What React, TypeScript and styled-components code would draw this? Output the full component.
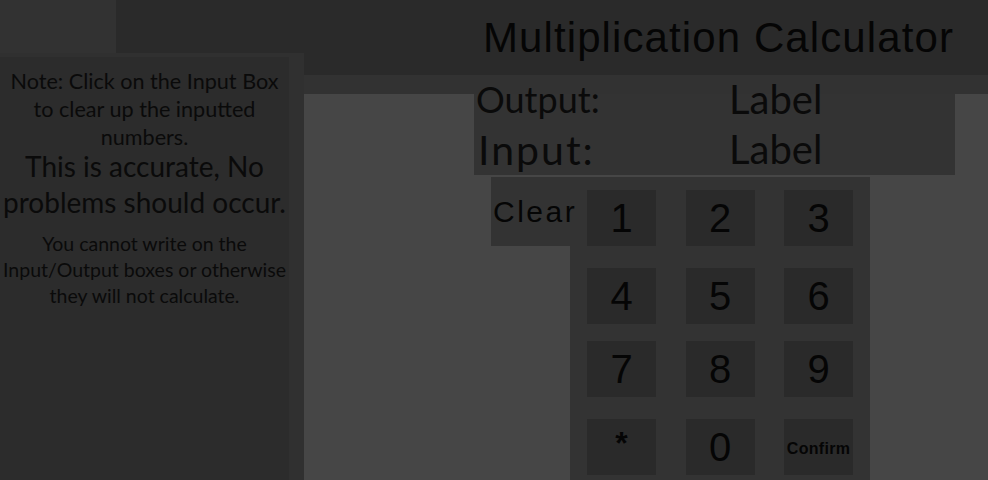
import React from "react";
import styled, { createGlobalStyle } from "styled-components";

const GlobalStyle = createGlobalStyle`
  html, body {
    margin: 0;
    padding: 0;
    background: #333333;
  }
  body {
    width: 988px;
    height: 480px;
    overflow: hidden;
  }
  * { box-sizing: border-box; }
`;

const CARTOON = `"Liberation Sans", Arial, sans-serif`;
const SANS = `Lato, "Noto Sans", sans-serif`;

const Screen = styled.div`
  width: 988px;
  height: 480px;
  display: grid;
  grid-template-columns: 116px 188px 1fr;
  grid-template-rows: 53px 22px 19px 1fr;
  background: #323232;
  overflow: hidden;
`;

const TitleBar = styled.header`
  grid-column: 2 / 4;
  grid-row: 1 / 3;
  background: #2a2a2a;
  display: flex;
  align-items: center;
  justify-content: flex-end;
  padding-right: 34px;
`;

const Title = styled.h1`
  margin: 0;
  font-family: ${CARTOON};
  font-weight: 400;
  font-size: 42px;
  letter-spacing: 1.1px;
  color: #050505;
  line-height: 1;
`;

const SidePanel = styled.aside`
  grid-column: 1 / 3;
  grid-row: 2 / 5;
  z-index: 1;
  background: #303030;
  padding: 4px 15px 0 0;
  display: flex;
`;

const Notes = styled.div`
  flex: 1;
  background: #2c2c2c;
  display: flex;
  flex-direction: column;
  align-items: center;
  text-align: center;
  font-family: ${SANS};
  color: #0a0a0a;
  padding-top: 10px;
`;

const Note = styled.p<{ $size: number; $line: number; $gap?: number }>`
  margin: ${(p) => p.$gap ?? 0}px 0 0;
  font-size: ${(p) => p.$size}px;
  line-height: ${(p) => p.$line}px;
  white-space: pre-line;
`;

const Main = styled.main`
  grid-column: 3;
  grid-row: 4;
  background: #464646;
  display: flex;
  flex-direction: column;
  padding: 0 33px 0 170px;
  min-height: 0;
`;

const Display = styled.section`
  height: 81px;
  background: #333333;
  display: flex;
  flex-direction: column;
  font-family: ${SANS};
  color: #0a0a0a;
`;

const DisplayRow = styled.div<{ $indent: number; $top: number }>`
  display: grid;
  grid-template-columns: ${(p) => 255 - p.$indent}px 1fr;
  padding-left: ${(p) => p.$indent}px;
  margin-top: ${(p) => p.$top}px;
  height: 11px;
  line-height: 11px;
  white-space: nowrap;
`;

const Caption = styled.span<{ $size: number; $spacing?: number }>`
  font-size: ${(p) => p.$size}px;
  letter-spacing: ${(p) => p.$spacing ?? 0}px;
`;

const Value = styled.span`
  font-size: 40px;
`;

const Controls = styled.div`
  flex: 1;
  display: flex;
  margin: 2px 0 0 17px;
  min-height: 0;
`;

const ClearButton = styled.button`
  position: relative;
  z-index: 1;
  width: 79px;
  height: 69px;
  border: 0;
  margin: 0;
  padding: 20px 0 0 2px;
  background: #333333;
  display: flex;
  align-items: flex-start;
  font-family: ${CARTOON};
  font-size: 30px;
  letter-spacing: 2.5px;
  line-height: 1;
  color: #050505;
  white-space: nowrap;
  overflow: visible;
`;

const Keypad = styled.div`
  width: 300px;
  background: #333333;
  display: grid;
  grid-template-columns: repeat(3, 69px);
  grid-template-rows: 78px 73px 78px 56px;
  column-gap: 29.5px;
  padding: 13px 0 0 17px;
  align-items: start;
`;

type KeyKind = "digit" | "small" | "star";

const Key = styled.button<{ $kind: KeyKind }>`
  height: 56px;
  border: 0;
  margin: 0;
  padding: ${(p) => (p.$kind === "star" ? "8px 0 0" : p.$kind === "small" ? "4px 0 0" : "0")};
  background: #2a2a2a;
  display: flex;
  justify-content: center;
  align-items: ${(p) => (p.$kind === "star" ? "flex-start" : "center")};
  font-family: ${CARTOON};
  font-size: ${(p) => (p.$kind === "small" ? 16 : p.$kind === "star" ? 32 : 40)}px;
  font-weight: ${(p) => (p.$kind === "digit" ? 400 : 700)};
  letter-spacing: ${(p) => (p.$kind === "small" ? 0.3 : 0)}px;
  line-height: 1;
  color: #050505;
`;

const keys = ["1", "2", "3", "4", "5", "6", "7", "8", "9", "*", "0", "Confirm"];

const kindOf = (k: string): KeyKind => (k === "Confirm" ? "small" : k === "*" ? "star" : "digit");

export default function App() {
  return (
    <>
      <GlobalStyle />
      <Screen>
        <TitleBar>
          <Title>Multiplication Calculator</Title>
        </TitleBar>
        <SidePanel>
          <Notes>
            <Note $size={21.6} $line={28}>
              {"Note: Click on the Input Box\nto clear up the inputted\nnumbers."}
            </Note>
            <Note $size={28} $line={36} $gap={-3.5}>
              {"This is accurate, No\nproblems should occur."}
            </Note>
            <Note $size={19.5} $line={26} $gap={11}>
              {"You cannot write on the\nInput/Output boxes or otherwise\nthey will not calculate."}
            </Note>
          </Notes>
        </SidePanel>
        <Main>
          <Display>
            <DisplayRow $indent={2} $top={0}>
              <Caption $size={36}>Output:</Caption>
              <Value>Label</Value>
            </DisplayRow>
            <DisplayRow $indent={4} $top={39}>
              <Caption $size={41} $spacing={2}>Input:</Caption>
              <Value>Label</Value>
            </DisplayRow>
          </Display>
          <Controls>
            <ClearButton>Clear</ClearButton>
            <Keypad>
              {keys.map((k) => (
                <Key key={k} $kind={kindOf(k)}>
                  {k}
                </Key>
              ))}
            </Keypad>
          </Controls>
        </Main>
      </Screen>
    </>
  );
}
